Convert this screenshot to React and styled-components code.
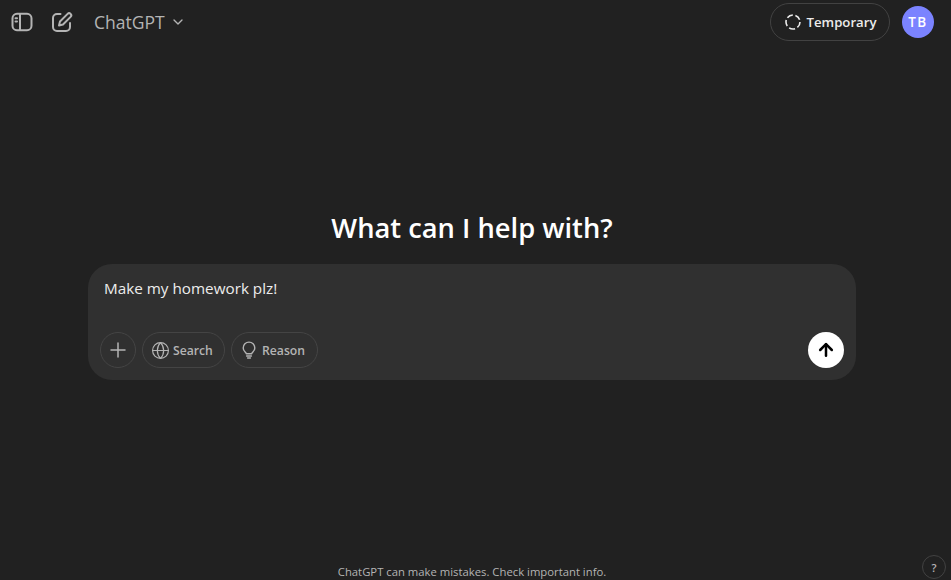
import React from 'react'
import styled, { createGlobalStyle } from 'styled-components'
import { ArrowUp, ChevronDown, Globe, Plus } from 'lucide-react'

const GlobalStyle = createGlobalStyle`
  html, body {
    margin: 0;
    height: 100%;
    background: #212121;
    overflow: hidden;
  }
  body {
    font-family: "Open Sans", "Noto Sans", "Liberation Sans", sans-serif;
    color: #ececec;
  }
  * { box-sizing: border-box; }
`

const Page = styled.div`
  position: relative;
  height: 580px;
  display: flex;
  flex-direction: column;
  background: #212121;
`

const Header = styled.header`
  height: 44px;
  display: flex;
  align-items: center;
  justify-content: space-between;
  padding: 0 17px 0 10px;
`

const HeaderGroup = styled.div`
  display: flex;
  align-items: center;
`

const IconSlot = styled.span`
  width: 24px;
  height: 24px;
  display: flex;
  color: #b4b4b4;
  margin-right: ${p => p.$gap}px;
`

const ModelName = styled.div`
  display: flex;
  align-items: center;
  gap: 5px;
  font-size: 17.5px;
  font-weight: 500;
  color: #b4b4b4;
`

const TemporaryButton = styled.button`
  height: 38px;
  width: 120px;
  margin-right: 12px;
  padding: 0;
  display: flex;
  align-items: center;
  justify-content: center;
  gap: 5px;
  background: transparent;
  border: 1px solid #424242;
  border-radius: 19px;
  color: #ececec;
  font: 600 13.2px "Open Sans", sans-serif;
`

const Avatar = styled.div`
  width: 32px;
  height: 32px;
  border-radius: 50%;
  background: #7b83ff;
  color: #fff;
  display: flex;
  align-items: center;
  justify-content: center;
  font-size: 13.5px;
  font-weight: 600;
  letter-spacing: 1.5px;
`

const Main = styled.main`
  flex: 1;
  display: flex;
  flex-direction: column;
  align-items: center;
  padding: 164px 7px 0 0;
`

const Heading = styled.h1`
  margin: 0 0 16px;
  height: 40px;
  line-height: 40px;
  font-size: 27.3px;
  font-weight: 600;
  color: #fff;
`

const Composer = styled.div`
  width: 768px;
  height: 116px;
  padding: 12px;
  display: flex;
  flex-direction: column;
  justify-content: space-between;
  background: #303030;
  border-radius: 24px;
`

const Prompt = styled.div`
  padding: 0 4px;
  font-size: 15.25px;
  line-height: 24px;
  color: #ececec;
`

const Toolbar = styled.div`
  display: flex;
  align-items: center;
  gap: 6px;
`

const Pill = styled.button`
  height: 36px;
  width: ${p => p.$width}px;
  padding: 0 0 0 ${p => p.$pad || 0}px;
  display: flex;
  align-items: center;
  justify-content: ${p => (p.$pad ? 'flex-start' : 'center')};
  gap: ${p => p.$gap || 0}px;
  background: transparent;
  border: 1px solid #444;
  border-radius: 18px;
  color: #b4b4b4;
  font: 600 12.2px "Open Sans", sans-serif;
`

const SendButton = styled.button`
  width: 36px;
  height: 36px;
  margin-left: auto;
  padding: 0;
  display: flex;
  align-items: center;
  justify-content: center;
  background: #fff;
  border: 0;
  border-radius: 50%;
  color: #000;
`

const Footer = styled.footer`
  height: 20px;
  padding: 4px 7px 0 0;
  text-align: center;
  font-size: 11.3px;
  line-height: 16px;
  white-space: nowrap;
  color: #b4b4b4;
`

const HelpButton = styled.button`
  position: absolute;
  right: 5px;
  bottom: 1px;
  width: 24px;
  height: 24px;
  padding: 0;
  background: transparent;
  border: 1px solid #424242;
  border-radius: 50%;
  color: #b4b4b4;
  font: 600 11px "Open Sans", sans-serif;
`

const SidebarIcon = () => (
  <svg width="24" height="24" viewBox="0 0 24 24" fill="none" stroke="currentColor" strokeWidth="2">
    <rect x="2.5" y="3.8" width="19" height="16.4" rx="4.5" />
    <path d="M10 4v16" />
    <path d="M5.5 8.2h1.5M5.5 11.5h1.5" strokeLinecap="round" />
  </svg>
)

const ComposeIcon = () => (
  <svg width="24" height="24" viewBox="0 0 24 24" fill="none" stroke="currentColor" strokeWidth="2" strokeLinecap="round" strokeLinejoin="round">
    <path d="M10.5 4H7A4 4 0 0 0 3 8v9a4 4 0 0 0 4 4h9a4 4 0 0 0 4-4v-4" />
    <path d="M17.6 3.9a2.1 2.1 0 0 1 3 3L13 14.5l-4 1 1-4z" />
  </svg>
)

const TemporaryIcon = () => (
  <svg width="18" height="18" viewBox="0 0 18 18" fill="none" stroke="currentColor" strokeWidth="1.6">
    <circle cx="9" cy="9" r="7" strokeDasharray="6.2 2.6" />
  </svg>
)

const BulbIcon = () => (
  <svg width="18" height="18" viewBox="0 0 18 18" fill="none" stroke="currentColor" strokeWidth="1.4" strokeLinecap="round" strokeLinejoin="round">
    <path d="M6.4 12.8C6.2 11.4 3.2 10.3 3.2 6.9a5.8 5.8 0 0 1 11.6 0c0 3.4-3 4.5-3.2 5.9z" />
    <path d="M6.6 15h4.8M7.6 17h2.8" />
  </svg>
)

export default function App() {
  return (
    <Page>
      <GlobalStyle />
      <Header>
        <HeaderGroup>
          <IconSlot $gap={16}><SidebarIcon /></IconSlot>
          <IconSlot $gap={20}><ComposeIcon /></IconSlot>
          <ModelName>
            ChatGPT
            <ChevronDown size={16} />
          </ModelName>
        </HeaderGroup>
        <HeaderGroup>
          <TemporaryButton>
            <TemporaryIcon />
            Temporary
          </TemporaryButton>
          <Avatar>TB</Avatar>
        </HeaderGroup>
      </Header>
      <Main>
        <Heading>What can I help with?</Heading>
        <Composer>
          <Prompt>Make my homework plz!</Prompt>
          <Toolbar>
            <Pill $width={36}><Plus size={24} strokeWidth={1.5} /></Pill>
            <Pill $width={83} $pad={8} $gap={3}><Globe size={19} strokeWidth={1.5} />Search</Pill>
            <Pill $width={87} $pad={8} $gap={4}><BulbIcon />Reason</Pill>
            <SendButton><ArrowUp size={20} strokeWidth={3} /></SendButton>
          </Toolbar>
        </Composer>
      </Main>
      <Footer>ChatGPT can make mistakes. Check important info.</Footer>
      <HelpButton>?</HelpButton>
    </Page>
  )
}
